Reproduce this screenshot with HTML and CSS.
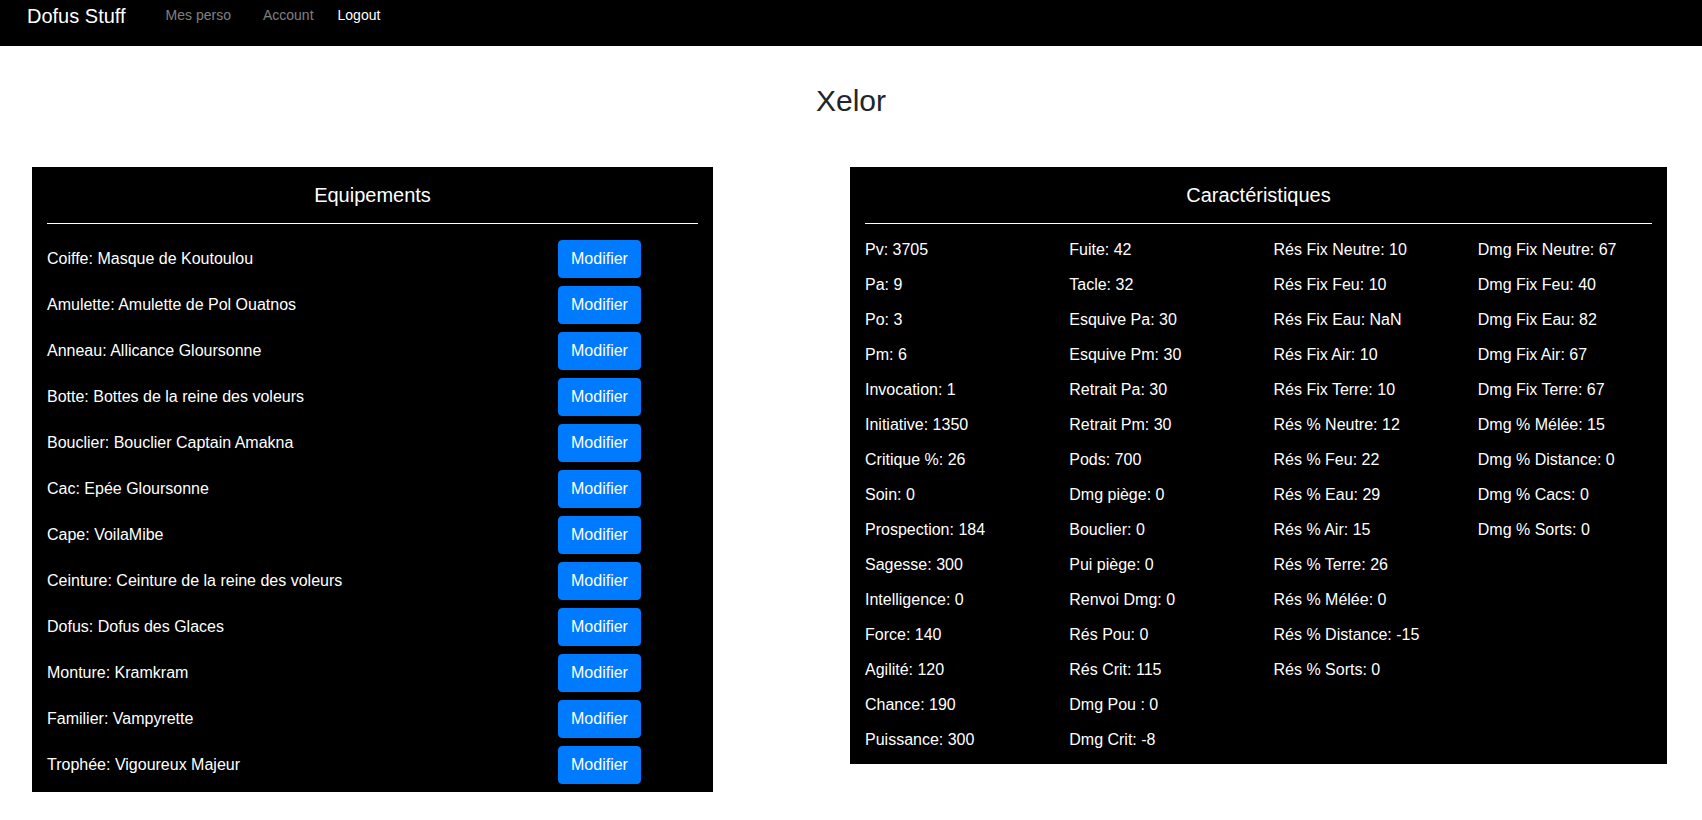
FILE: index.html
```html
<!DOCTYPE html>
<html lang="fr">
<head>
<meta charset="utf-8">
<title>Dofus Stuff</title>
<link rel="stylesheet" href="styles.css">
</head>
<body>
<nav class="navbar">
  <a class="brand" href="#">Dofus Stuff</a>
  <a class="nav-link" href="#">Mes perso</a>
  <a class="nav-link" href="#">Account</a>
  <a class="nav-logout" href="#">Logout</a>
</nav>

<h1 class="title">Xelor</h1>

<main class="panels">
  <section class="panel panel-equip">
    <h2 class="panel-title">Equipements</h2>
    <hr class="panel-rule">
    <ul class="equip-list">
      <li class="equip-row"><span class="equip-name">Coiffe: Masque de Koutoulou</span><button class="btn">Modifier</button></li>
      <li class="equip-row"><span class="equip-name">Amulette: Amulette de Pol Ouatnos</span><button class="btn">Modifier</button></li>
      <li class="equip-row"><span class="equip-name">Anneau: Allicance Gloursonne</span><button class="btn">Modifier</button></li>
      <li class="equip-row"><span class="equip-name">Botte: Bottes de la reine des voleurs</span><button class="btn">Modifier</button></li>
      <li class="equip-row"><span class="equip-name">Bouclier: Bouclier Captain Amakna</span><button class="btn">Modifier</button></li>
      <li class="equip-row"><span class="equip-name">Cac: Epée Gloursonne</span><button class="btn">Modifier</button></li>
      <li class="equip-row"><span class="equip-name">Cape: VoilaMibe</span><button class="btn">Modifier</button></li>
      <li class="equip-row"><span class="equip-name">Ceinture: Ceinture de la reine des voleurs</span><button class="btn">Modifier</button></li>
      <li class="equip-row"><span class="equip-name">Dofus: Dofus des Glaces</span><button class="btn">Modifier</button></li>
      <li class="equip-row"><span class="equip-name">Monture: Kramkram</span><button class="btn">Modifier</button></li>
      <li class="equip-row"><span class="equip-name">Familier: Vampyrette</span><button class="btn">Modifier</button></li>
      <li class="equip-row"><span class="equip-name">Trophée: Vigoureux Majeur</span><button class="btn">Modifier</button></li>
    </ul>
  </section>

  <section class="panel panel-stats">
    <h2 class="panel-title">Caractéristiques</h2>
    <hr class="panel-rule">
    <div class="stats-grid">
      <ul class="stats-col">
        <li>Pv: 3705</li>
        <li>Pa: 9</li>
        <li>Po: 3</li>
        <li>Pm: 6</li>
        <li>Invocation: 1</li>
        <li>Initiative: 1350</li>
        <li>Critique %: 26</li>
        <li>Soin: 0</li>
        <li>Prospection: 184</li>
        <li>Sagesse: 300</li>
        <li>Intelligence: 0</li>
        <li>Force: 140</li>
        <li>Agilité: 120</li>
        <li>Chance: 190</li>
        <li>Puissance: 300</li>
      </ul>
      <ul class="stats-col">
        <li>Fuite: 42</li>
        <li>Tacle: 32</li>
        <li>Esquive Pa: 30</li>
        <li>Esquive Pm: 30</li>
        <li>Retrait Pa: 30</li>
        <li>Retrait Pm: 30</li>
        <li>Pods: 700</li>
        <li>Dmg piège: 0</li>
        <li>Bouclier: 0</li>
        <li>Pui piège: 0</li>
        <li>Renvoi Dmg: 0</li>
        <li>Rés Pou: 0</li>
        <li>Rés Crit: 115</li>
        <li>Dmg Pou : 0</li>
        <li>Dmg Crit: -8</li>
      </ul>
      <ul class="stats-col">
        <li>Rés Fix Neutre: 10</li>
        <li>Rés Fix Feu: 10</li>
        <li>Rés Fix Eau: NaN</li>
        <li>Rés Fix Air: 10</li>
        <li>Rés Fix Terre: 10</li>
        <li>Rés % Neutre: 12</li>
        <li>Rés % Feu: 22</li>
        <li>Rés % Eau: 29</li>
        <li>Rés % Air: 15</li>
        <li>Rés % Terre: 26</li>
        <li>Rés % Mélée: 0</li>
        <li>Rés % Distance: -15</li>
        <li>Rés % Sorts: 0</li>
      </ul>
      <ul class="stats-col">
        <li>Dmg Fix Neutre: 67</li>
        <li>Dmg Fix Feu: 40</li>
        <li>Dmg Fix Eau: 82</li>
        <li>Dmg Fix Air: 67</li>
        <li>Dmg Fix Terre: 67</li>
        <li>Dmg % Mélée: 15</li>
        <li>Dmg % Distance: 0</li>
        <li>Dmg % Cacs: 0</li>
        <li>Dmg % Sorts: 0</li>
      </ul>
    </div>
  </section>
</main>
</body>
</html>
```

FILE: styles.css
```css
* {
  box-sizing: border-box;
}

html, body {
  margin: 0;
  padding: 0;
}

body {
  font-family: "Liberation Sans", Arial, sans-serif;
  font-size: 16px;
  line-height: 1.5;
  color: #212529;
  background: #fff;
}

/* Navbar */
.navbar {
  display: flex;
  align-items: flex-start;
  height: 46px;
  padding-left: 27px;
  background: #000;
}

.brand {
  font-size: 20px;
  line-height: 30px;
  margin-top: 1px;
  margin-right: 24px;
  color: #fff;
  text-decoration: none;
}

.nav-link,
.nav-logout {
  font-size: 14px;
  line-height: 21px;
  margin-top: 5px;
  text-decoration: none;
}

.nav-link {
  padding: 0 16px;
  color: rgba(255, 255, 255, 0.5);
}

.nav-logout {
  padding: 0 8px;
  color: #fff;
}

/* Title */
.title {
  margin: 37px 0 0;
  font-size: 30px;
  font-weight: 400;
  line-height: 36px;
  text-align: center;
  color: #212529;
}

/* Panels */
.panels {
  display: flex;
  align-items: flex-start;
  gap: 137px;
  margin-top: 48px;
  padding-left: 32px;
}

.panel {
  background: #000;
  color: #fff;
  padding: 16px 15px 0;
}

.panel-equip {
  width: 681px;
}

.panel-stats {
  width: 817px;
  padding-bottom: 7px;
}

.panel-title {
  margin: 0;
  font-size: 20px;
  font-weight: 400;
  line-height: 24px;
  text-align: center;
}

.panel-rule {
  margin: 16px 0 0;
  border: 0;
  border-top: 1px solid #fff;
  height: 0;
}

/* Equipment list */
.equip-list {
  list-style: none;
  margin: 16px 0 0;
  padding: 0;
}

.equip-row {
  display: grid;
  grid-template-columns: 511px auto;
  align-items: center;
  height: 38px;
  margin-bottom: 8px;
}

.equip-name {
  line-height: 24px;
}

.btn {
  justify-self: start;
  font-family: inherit;
  font-size: 16px;
  line-height: 24px;
  padding: 6px 12px;
  border: 1px solid #007bff;
  border-radius: 4px;
  background: #007bff;
  color: #fff;
  cursor: pointer;
}

/* Stats grid */
.stats-grid {
  display: grid;
  grid-template-columns: repeat(4, 1fr);
  margin: 8px -15px 0;
}

.stats-col {
  list-style: none;
  margin: 0;
  padding: 0 15px;
}

.stats-col li {
  line-height: 35px;
  white-space: nowrap;
}
```
